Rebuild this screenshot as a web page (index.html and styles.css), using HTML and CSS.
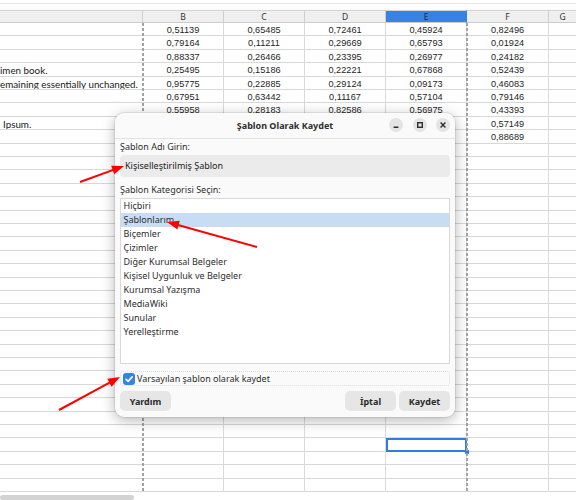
FILE: index.html
```html
<!DOCTYPE html>
<html lang="tr">
<head>
<meta charset="utf-8">
<title>Şablon Olarak Kaydet</title>
<link rel="stylesheet" href="styles.css">
</head>
<body>
<div class="sheet">
  <div class="topbar"></div>
  <div class="row head">
    <div class="c ha"></div><div class="c">B</div><div class="c">C</div><div class="c">D</div><div class="c cur">E</div><div class="c">F</div><div class="c">G</div>
  </div>
  <div class="row"><div class="c a"></div><div class="c">0,51139</div><div class="c">0,65485</div><div class="c">0,72461</div><div class="c">0,45924</div><div class="c">0,82496</div><div class="c"></div></div>
  <div class="row"><div class="c a"></div><div class="c">0,79164</div><div class="c">0,11211</div><div class="c">0,29669</div><div class="c">0,65793</div><div class="c">0,01924</div><div class="c"></div></div>
  <div class="row"><div class="c a"></div><div class="c">0,88337</div><div class="c">0,26466</div><div class="c">0,23395</div><div class="c">0,26977</div><div class="c">0,24182</div><div class="c"></div></div>
  <div class="row"><div class="c a">imen book.</div><div class="c">0,25495</div><div class="c">0,15186</div><div class="c">0,22221</div><div class="c">0,67868</div><div class="c">0,52439</div><div class="c"></div></div>
  <div class="row"><div class="c a">emaining essentially unchanged.</div><div class="c">0,95775</div><div class="c">0,22885</div><div class="c">0,29124</div><div class="c">0,09173</div><div class="c">0,46083</div><div class="c"></div></div>
  <div class="row"><div class="c a"></div><div class="c">0,67951</div><div class="c">0,63442</div><div class="c">0,11167</div><div class="c">0,57104</div><div class="c">0,79146</div><div class="c"></div></div>
  <div class="row"><div class="c a"></div><div class="c">0,55958</div><div class="c">0,28183</div><div class="c">0,82586</div><div class="c">0,56975</div><div class="c">0,43393</div><div class="c"></div></div>
  <div class="row"><div class="c a a-ind">Ipsum.</div><div class="c"></div><div class="c"></div><div class="c"></div><div class="c"></div><div class="c">0,57149</div><div class="c"></div></div>
  <div class="row"><div class="c a"></div><div class="c"></div><div class="c"></div><div class="c"></div><div class="c"></div><div class="c">0,88689</div><div class="c"></div></div>
  <!-- rows 10-31 -->
  <div class="row"><div class="c a"></div><div class="c"></div><div class="c"></div><div class="c"></div><div class="c"></div><div class="c"></div><div class="c"></div></div>
  <div class="row"><div class="c a"></div><div class="c"></div><div class="c"></div><div class="c"></div><div class="c"></div><div class="c"></div><div class="c"></div></div>
  <div class="row"><div class="c a"></div><div class="c"></div><div class="c"></div><div class="c"></div><div class="c"></div><div class="c"></div><div class="c"></div></div>
  <div class="row"><div class="c a"></div><div class="c"></div><div class="c"></div><div class="c"></div><div class="c"></div><div class="c"></div><div class="c"></div></div>
  <div class="row"><div class="c a"></div><div class="c"></div><div class="c"></div><div class="c"></div><div class="c"></div><div class="c"></div><div class="c"></div></div>
  <div class="row"><div class="c a"></div><div class="c"></div><div class="c"></div><div class="c"></div><div class="c"></div><div class="c"></div><div class="c"></div></div>
  <div class="row"><div class="c a"></div><div class="c"></div><div class="c"></div><div class="c"></div><div class="c"></div><div class="c"></div><div class="c"></div></div>
  <div class="row"><div class="c a"></div><div class="c"></div><div class="c"></div><div class="c"></div><div class="c"></div><div class="c"></div><div class="c"></div></div>
  <div class="row"><div class="c a"></div><div class="c"></div><div class="c"></div><div class="c"></div><div class="c"></div><div class="c"></div><div class="c"></div></div>
  <div class="row"><div class="c a"></div><div class="c"></div><div class="c"></div><div class="c"></div><div class="c"></div><div class="c"></div><div class="c"></div></div>
  <div class="row"><div class="c a"></div><div class="c"></div><div class="c"></div><div class="c"></div><div class="c"></div><div class="c"></div><div class="c"></div></div>
  <div class="row"><div class="c a"></div><div class="c"></div><div class="c"></div><div class="c"></div><div class="c"></div><div class="c"></div><div class="c"></div></div>
  <div class="row"><div class="c a"></div><div class="c"></div><div class="c"></div><div class="c"></div><div class="c"></div><div class="c"></div><div class="c"></div></div>
  <div class="row"><div class="c a"></div><div class="c"></div><div class="c"></div><div class="c"></div><div class="c"></div><div class="c"></div><div class="c"></div></div>
  <div class="row"><div class="c a"></div><div class="c"></div><div class="c"></div><div class="c"></div><div class="c"></div><div class="c"></div><div class="c"></div></div>
  <div class="row"><div class="c a"></div><div class="c"></div><div class="c"></div><div class="c"></div><div class="c"></div><div class="c"></div><div class="c"></div></div>
  <div class="row"><div class="c a"></div><div class="c"></div><div class="c"></div><div class="c"></div><div class="c"></div><div class="c"></div><div class="c"></div></div>
  <div class="row"><div class="c a"></div><div class="c"></div><div class="c"></div><div class="c"></div><div class="c"></div><div class="c"></div><div class="c"></div></div>
  <div class="row"><div class="c a"></div><div class="c"></div><div class="c"></div><div class="c"></div><div class="c"></div><div class="c"></div><div class="c"></div></div>
  <div class="row"><div class="c a"></div><div class="c"></div><div class="c"></div><div class="c"></div><div class="c"></div><div class="c"></div><div class="c"></div></div>
  <div class="row"><div class="c a"></div><div class="c"></div><div class="c"></div><div class="c"></div><div class="c"></div><div class="c"></div><div class="c"></div></div>
  <div class="row"><div class="c a"></div><div class="c"></div><div class="c"></div><div class="c"></div><div class="c"></div><div class="c"></div><div class="c"></div></div>
  <!-- row 32 -->
  <div class="row"><div class="c a"></div><div class="c"></div><div class="c"></div><div class="c"></div><div class="c sel"></div><div class="c"></div><div class="c"></div></div>
  <!-- rows 33-35 -->
  <div class="row"><div class="c a"></div><div class="c"></div><div class="c"></div><div class="c"></div><div class="c"></div><div class="c"></div><div class="c"></div></div>
  <div class="row"><div class="c a"></div><div class="c"></div><div class="c"></div><div class="c"></div><div class="c"></div><div class="c"></div><div class="c"></div></div>
  <div class="row"><div class="c a"></div><div class="c"></div><div class="c"></div><div class="c"></div><div class="c"></div><div class="c"></div><div class="c"></div></div>
  <div class="hscroll"><div class="thumb"></div></div>
  <div class="pbreak pb-b"></div>
  <div class="pbreak pb-f"></div>
</div>

<div class="dialog">
  <div class="titlebar">
    <span class="title">Şablon Olarak Kaydet</span>
    <div class="wctl">
      <span class="wbtn"><svg width="14" height="14" viewBox="0 0 14 14"><path d="M4.6 9.2H9.4" stroke="#2e2e2e" stroke-width="1.5" fill="none"/></svg></span>
      <span class="wbtn"><svg width="14" height="14" viewBox="0 0 14 14"><rect x="4.7" y="4.7" width="4.6" height="4.6" stroke="#2e2e2e" stroke-width="1.4" fill="none"/></svg></span>
      <span class="wbtn"><svg width="14" height="14" viewBox="0 0 14 14"><path d="M4.6 4.6L9.4 9.4M9.4 4.6L4.6 9.4" stroke="#2e2e2e" stroke-width="1.4" fill="none"/></svg></span>
    </div>
  </div>
  <div class="dbody">
    <div class="lbl">Şablon Adı Girin:</div>
    <div class="input">Kişiselleştirilmiş Şablon</div>
    <div class="lbl lbl2">Şablon Kategorisi Seçin:</div>
    <div class="list">
      <div class="item">Hiçbiri</div>
      <div class="item picked">Şablonlarım</div>
      <div class="item">Biçemler</div>
      <div class="item">Çizimler</div>
      <div class="item">Diğer Kurumsal Belgeler</div>
      <div class="item">Kişisel Uygunluk ve Belgeler</div>
      <div class="item">Kurumsal Yazışma</div>
      <div class="item">MediaWiki</div>
      <div class="item">Sunular</div>
      <div class="item">Yerelleştirme</div>
    </div>
    <div class="chkrow">
      <span class="chk"><svg width="12" height="12" viewBox="0 0 12 12"><path d="M3 6.3L5.1 8.4L9.2 3.9" stroke="#fff" stroke-width="1.6" fill="none" stroke-linecap="round" stroke-linejoin="round"/></svg></span>
      <span class="chklbl">Varsayılan şablon olarak kaydet</span>
    </div>
    <div class="btns">
      <button class="btn">Yardım</button>
      <span class="spacer"></span>
      <button class="btn">İptal</button>
      <button class="btn">Kaydet</button>
    </div>
  </div>
</div>

<svg class="arrows" width="576" height="500" viewBox="0 0 576 500">
  <g stroke="#ff0000" stroke-width="2" fill="#ff0000">
    <line x1="80" y1="182" x2="114" y2="169.6"/>
    <polygon points="124,166 114.26,174.33 111.18,165.87" stroke="none"/>
    <line x1="257" y1="247" x2="177" y2="224.8"/>
    <polygon points="167,222 179.76,220.87 177.36,229.55" stroke="none"/>
    <line x1="59" y1="410" x2="110.5" y2="382.2"/>
    <polygon points="120,377 111.58,386.67 107.3,378.75" stroke="none"/>
  </g>
</svg>
</body>
</html>
```

FILE: styles.css
```css
html, body {
  margin: 0;
  padding: 0;
  background: #ffffff;
  width: 576px;
  height: 500px;
  overflow: hidden;
}

.sheet {
  position: relative;
  width: 576px;
  height: 500px;
  overflow: hidden;
}

.topbar {
  margin-top: 3px;
  height: 7px;
  box-sizing: border-box;
  border-top: 1px solid #e6e6e6;
  background: #fcfcfc;
}

.row {
  display: grid;
  grid-template-columns: 143px 81px 81px 81px 81px 82px 1fr;
  height: 13px;
}

/* rows alternate 13/14px to follow the 13.4px pitch of the screenshot */
.sheet > .row:nth-child(5n+4),
.sheet > .row:nth-child(5n+6) {
  height: 14px;
}

.c {
  box-sizing: border-box;
  border-bottom: 1px solid #d8d8d8;
  border-right: 1px solid #dadada;
  display: flex;
  align-items: center;
  justify-content: center;
  font-family: "Liberation Sans", Arial, sans-serif;
  font-size: 9.2px;
  color: #1e1e1e;
  white-space: nowrap;
  overflow: hidden;
  padding-top: 1px;
}

.c:last-child {
  border-right: none;
}

.c.a {
  justify-content: flex-start;
  border-right: none;
  font-family: Lato, "Noto Sans", sans-serif;
  font-size: 9.8px;
  color: #202020;
  padding-top: 1px;
}

.c.a-ind {
  padding-left: 3px;
}

.sheet > .head {
  height: 13px;
  background: #efefef;
}

.head .c {
  border-top: 1px solid #d4d4d4;
  border-bottom: 1px solid #cbcbcb;
  border-right: 1px solid #cfcfcf;
  font-family: "Noto Sans", sans-serif;
  font-size: 8.5px;
  color: #333333;
  padding-top: 0;
}

.head .c:last-child {
  border-right: none;
}

.head .cur {
  background: #3584e4;
  color: #16263a;
  border-right-color: #3584e4;
}

.sel {
  position: relative;
  box-shadow: inset 0 0 0 2px #2f7de1;
  border-bottom: none;
  border-right: none;
  overflow: visible;
}

.sel::after {
  content: "";
  position: absolute;
  right: -2px;
  bottom: -2px;
  width: 4px;
  height: 4px;
  background: #2f7de1;
}

.hscroll {
  height: 9px;
  padding-top: 3px;
  box-sizing: border-box;
}

.thumb {
  width: 134px;
  height: 5px;
  border-radius: 3px;
  background: #d3d3d3;
}

.pbreak {
  position: absolute;
  top: 23px;
  height: 469px;
  width: 2px;
  background: repeating-linear-gradient(to bottom, #a2a2a2 0 3px, transparent 3px 5px);
}

.pb-b { left: 142px; }
.pb-f { left: 466px; }

/* dialog */
.dialog {
  position: absolute;
  left: 115px;
  top: 113px;
  width: 340px;
  height: 304px;
  background: #fafafa;
  border-radius: 9px;
  box-shadow: 0 3px 14px rgba(0, 0, 0, 0.3), 0 0 0 1px rgba(0, 0, 0, 0.07);
  display: flex;
  flex-direction: column;
  font-family: "Noto Sans", sans-serif;
  font-size: 9px;
  color: #2d2d2d;
  overflow: hidden;
}

.titlebar {
  position: relative;
  height: 26px;
  box-sizing: border-box;
  border-bottom: 1px solid #e2e2e2;
  display: flex;
  align-items: center;
  justify-content: center;
}

.title {
  font-weight: bold;
  font-size: 9px;
  color: #2e2e2e;
}

.wctl {
  position: absolute;
  right: 5px;
  top: 5px;
  display: flex;
  gap: 9.5px;
}

.wbtn {
  width: 14px;
  height: 14px;
  border-radius: 50%;
  background: #e4e4e4;
  display: block;
}

.wbtn svg {
  display: block;
}

.dbody {
  flex: 1;
  display: flex;
  flex-direction: column;
  padding: 0 5px 5px;
}

.lbl {
  height: 14px;
  line-height: 14px;
  margin-top: 1px;
}

.lbl2 {
  margin-top: 6px;
}

.input {
  margin-top: 1px;
  height: 22px;
  line-height: 22px;
  padding-left: 5px;
  border-radius: 4px;
  background: #ebebeb;
  color: #222222;
}

.list {
  margin-top: 1px;
  height: 166px;
  box-sizing: border-box;
  border: 1px solid #d9d9d9;
  background: #ffffff;
}

.item {
  height: 14px;
  line-height: 14px;
  padding-left: 2.5px;
}

.item.picked {
  background: #c8dcf3;
}

.chkrow {
  margin-top: 7px;
  height: 15px;
  box-sizing: border-box;
  border: 1px dotted #dedede;
  border-radius: 3px;
  display: flex;
  align-items: center;
  gap: 2px;
  padding-left: 2px;
}

.chk {
  width: 12px;
  height: 12px;
  border-radius: 3px;
  background: #3584e4;
  display: block;
}

.chk svg {
  display: block;
}

.btns {
  margin-top: 5px;
  display: flex;
  gap: 3px;
}

.spacer {
  flex: 1;
}

.btn {
  width: 51px;
  height: 20px;
  border: none;
  border-radius: 5px;
  background: #e6e6e6;
  font-family: "Noto Sans", sans-serif;
  font-size: 9px;
  font-weight: bold;
  color: #2a2a2a;
  padding: 0;
}

.arrows {
  position: absolute;
  left: 0;
  top: 0;
  pointer-events: none;
}
```
